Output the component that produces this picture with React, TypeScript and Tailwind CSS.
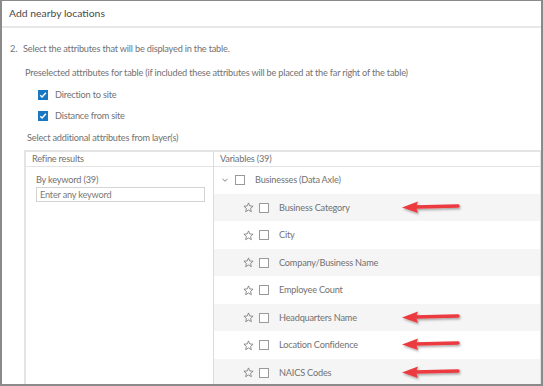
const rows = [
  { name: "Business Category", arrow: true },
  { name: "City", arrow: false },
  { name: "Company/Business Name", arrow: false },
  { name: "Employee Count", arrow: false },
  { name: "Headquarters Name", arrow: true },
  { name: "Location Confidence", arrow: true },
  { name: "NAICS Codes", arrow: true },
];

const Box = () => (
  <span className="block w-[10px] h-[10px] border border-[#9a9a9a] bg-white shrink-0" />
);

const Checked = () => (
  <span className="flex items-center justify-center w-[10px] h-[10px] bg-[#1a78c2] shrink-0">
    <svg width="8" height="8" viewBox="0 0 8 8">
      <path d="M1.2 4.2 L3.1 6 L6.9 1.8" fill="none" stroke="white" strokeWidth="1.4" />
    </svg>
  </span>
);

const Star = () => (
  <svg width="11" height="11" viewBox="0 0 12 12" className="shrink-0">
    <path
      d="M6 1 L7.4 4.3 L11 4.6 L8.3 7 L9.1 10.6 L6 8.7 L2.9 10.6 L3.7 7 L1 4.6 L4.6 4.3 Z"
      fill="none"
      stroke="#7a7a7a"
      strokeWidth="0.9"
      strokeLinejoin="round"
    />
  </svg>
);

const Arrow = () => (
  <svg width="64" height="18" viewBox="0 0 64 18" className="shrink-0">
    <defs>
      <filter id="sh" x="-20%" y="-50%" width="140%" height="200%">
        <feDropShadow dx="1" dy="1.5" stdDeviation="1" floodColor="#000" floodOpacity="0.35" />
      </filter>
    </defs>
    <g filter="url(#sh)">
      <line x1="14" y1="8" x2="57" y2="7" stroke="#ec3b3f" strokeWidth="3.5" strokeLinecap="round" />
      <path d="M1 8.5 L17 2.5 L15 8 L17 14 Z" fill="#ec3b3f" />
    </g>
  </svg>
);

const App = () => {
  return (
    <div className="w-[543px] h-[386px] overflow-hidden bg-white border-[#8a8a8a] border-t border-x-2 border-b-2 flex flex-col text-[#727272] font-['Lato','Open_Sans',sans-serif] text-[9.2px] tracking-[-0.2px]">
      <div className="h-[27px] shrink-0 flex items-center pl-[7px] border-b-2 border-[#e8e8e8] text-[10.4px] tracking-normal text-[#4a4a4a]">
        Add nearby locations
      </div>
      <div className="flex flex-col flex-1 min-h-0">
        <div className="pl-[8px] mt-[14px] h-[14px] flex items-center">
          <span className="w-[13px]">2.</span>
          <span>Select the attributes that will be displayed in the table.</span>
        </div>
        <div className="pl-[23px] mt-[10px] h-[14px] flex items-center">
          Preselected attributes for table (if included these attributes will be placed at the far right of the table)
        </div>
        <div className="pl-[36px] mt-[8px] h-[14px] flex items-center gap-[7px]">
          <Checked />
          <span>Direction to site</span>
        </div>
        <div className="pl-[36px] mt-[7px] h-[14px] flex items-center gap-[7px]">
          <Checked />
          <span>Distance from site</span>
        </div>
        <div className="pl-[25px] mt-[8px] h-[14px] flex items-center">
          Select additional attributes from layer(s)
        </div>
        <div className="ml-[22px] mt-[5px] flex-1 min-h-0 border-l-2 border-t-2 border-r border-[#e4e4e4] flex">
          <div className="w-[188px] shrink-0 border-r border-[#dcdcdc] flex flex-col">
            <div className="h-[15px] border-b border-[#e4e4e4] flex items-center pl-[6px]">Refine results</div>
            <div className="pl-[10px] pt-[6px] h-[14px] flex items-center mt-[3px]">By keyword (39)</div>
            <div className="ml-[10px] mt-[3px] w-[169px] h-[15px] border border-[#d4d4d4] flex items-center pl-[3px] text-[#7a7a7a]">
              Enter any keyword
            </div>
          </div>
          <div className="flex-1 flex flex-col">
            <div className="h-[15px] border-b border-[#e4e4e4] flex items-center pl-[6px]">Variables (39)</div>
            <div className="h-[27px] shrink-0 flex items-center pl-[7px]">
              <svg width="8" height="8" viewBox="0 0 8 8" className="shrink-0">
                <path d="M1.5 2.8 L4 5.3 L6.5 2.8" fill="none" stroke="#777" strokeWidth="0.9" />
              </svg>
              <span className="ml-[6px]"><Box /></span>
              <span className="ml-[10px]">Businesses (Data Axle)</span>
            </div>
            {rows.map((r, i) => (
              <div
                key={r.name}
                className={`h-[27.5px] shrink-0 flex items-center pl-[29px] ${i % 2 === 0 ? "bg-[#f5f5f5]" : "bg-white"}`}
              >
                <Star />
                <span className="ml-[5px]"><Box /></span>
                <span className="ml-[10px] w-[122px] whitespace-nowrap">{r.name}</span>
                {r.arrow && <Arrow />}
              </div>
            ))}
          </div>
        </div>
      </div>
    </div>
  );
};

export default App;
